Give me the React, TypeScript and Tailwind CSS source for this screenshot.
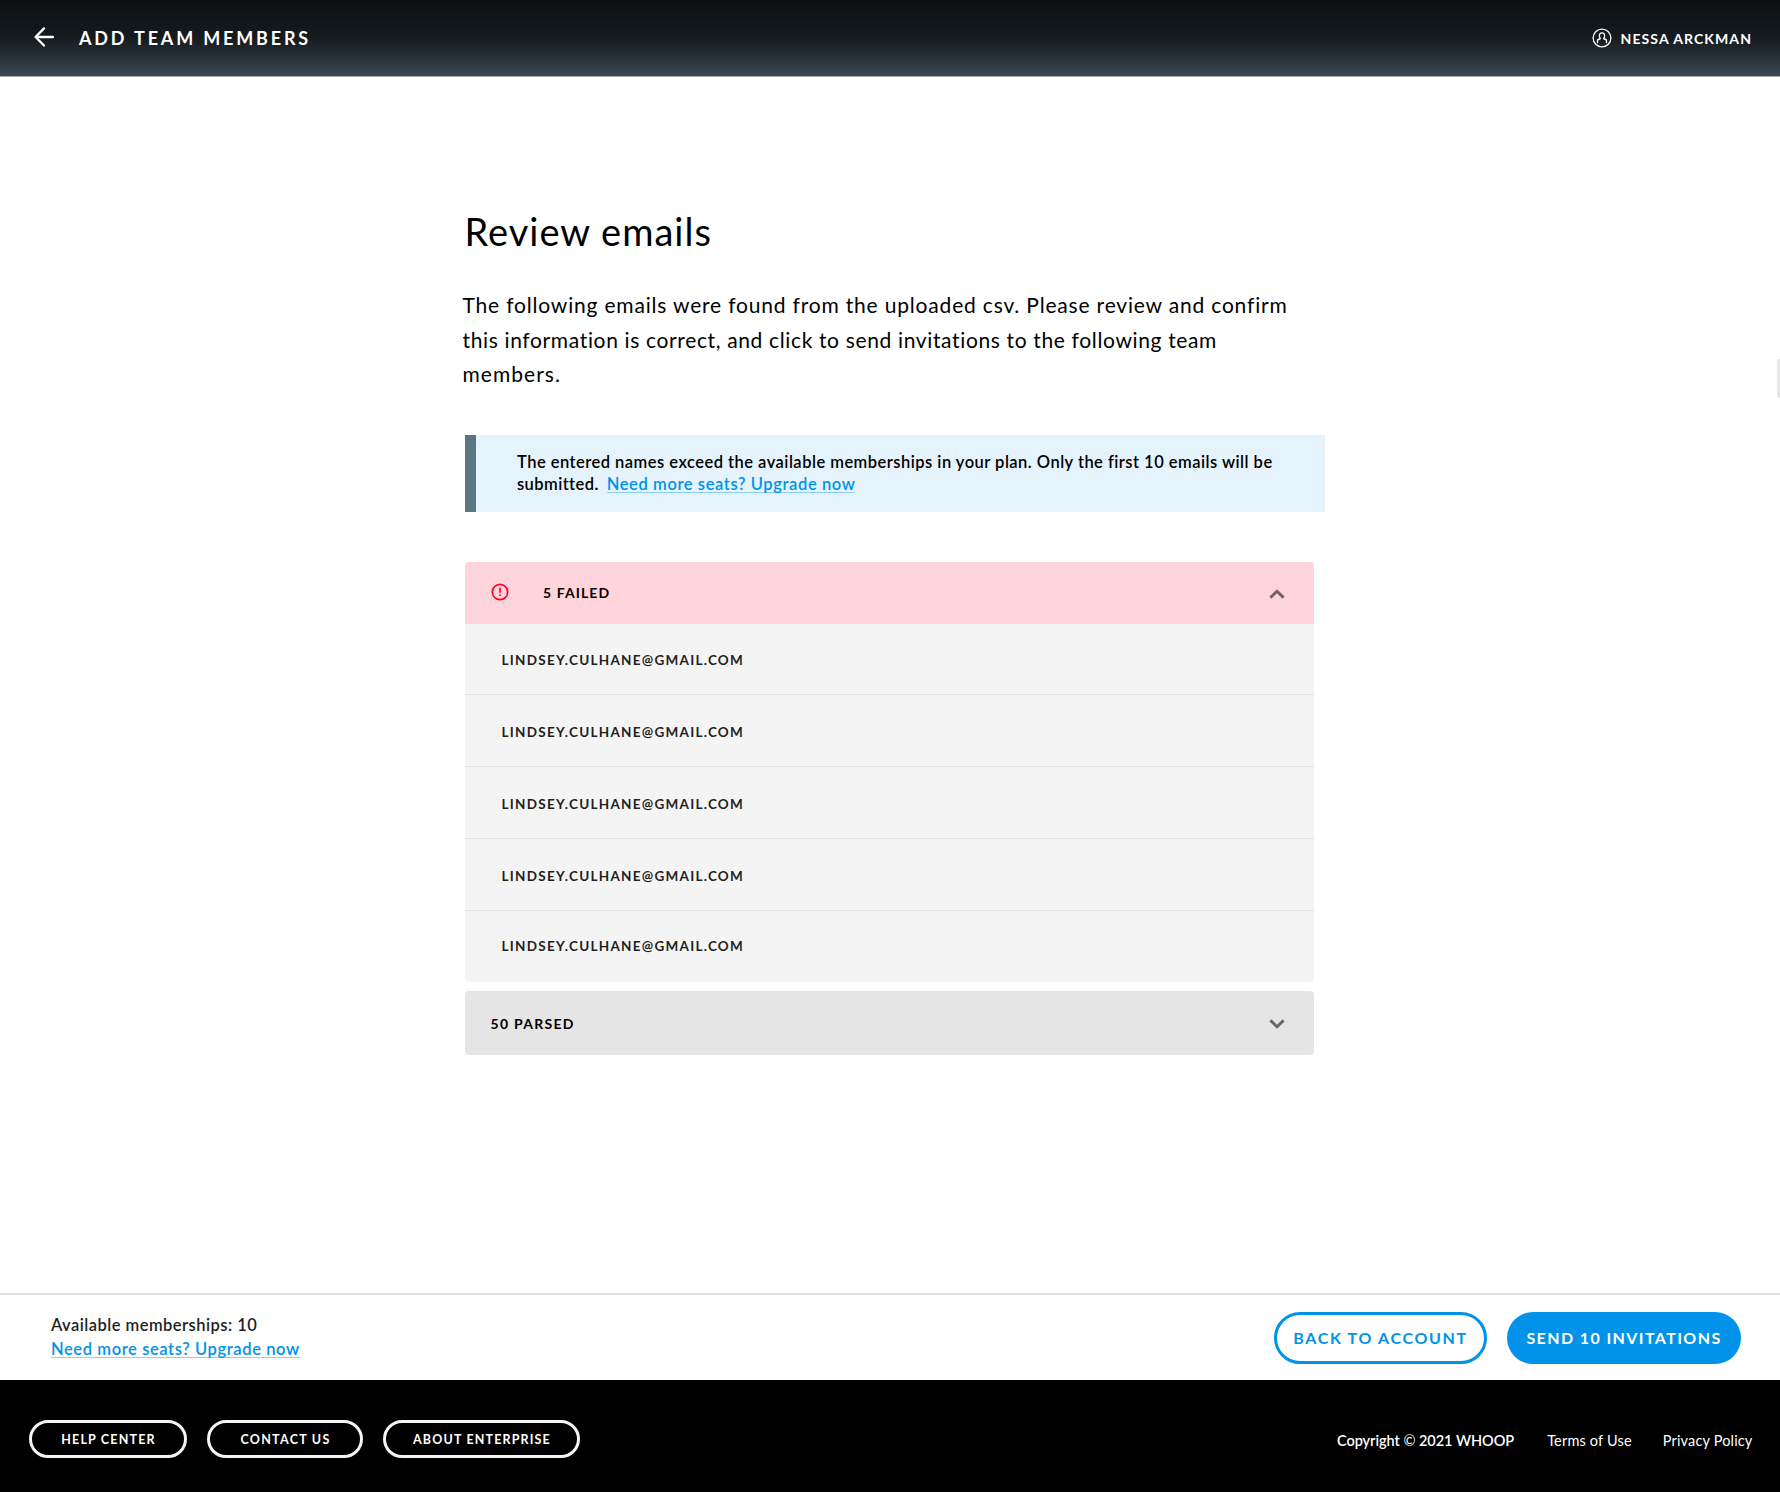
const failedRows = [
  { email: 'LINDSEY.CULHANE@GMAIL.COM', row: 'h-[71px] pt-[2px] border-b' },
  { email: 'LINDSEY.CULHANE@GMAIL.COM', row: 'h-[72px] pt-[4px] border-b' },
  { email: 'LINDSEY.CULHANE@GMAIL.COM', row: 'h-[72px] pt-[3px] border-b' },
  { email: 'LINDSEY.CULHANE@GMAIL.COM', row: 'h-[72px] pt-[4px] border-b' },
  { email: 'LINDSEY.CULHANE@GMAIL.COM', row: 'h-[71px]' },
];

function BackArrow() {
  return (
    <svg className="mb-[2px] h-5 w-5 shrink-0" viewBox="0 0 20 20" fill="none" stroke="currentColor" strokeWidth="2.3" strokeLinecap="round" strokeLinejoin="round">
      <path d="M18.9 10H1.6M10 1.4L1.6 10l8.4 8.5" />
    </svg>
  );
}

function UserIcon() {
  return (
    <svg className="mb-px h-5 w-5 shrink-0" viewBox="0 0 20 20" fill="none" stroke="currentColor" strokeWidth="1.3" strokeLinecap="round" strokeLinejoin="round">
      <circle cx="10" cy="10" r="8.9" />
      <path d="M5.500 14.700v-1.600c0-1.300.8-2 2.300-2.100l.5-.5c-.6-.7-.9-1.600-.9-2.700 0-1.800 1-3 2.600-3s2.600 1.200 2.600 3c0 1.100-.3 2-.9 2.700l.5.500c1.500.1 2.300.8 2.300 2.100v1.600" />
    </svg>
  );
}

function AlertIcon() {
  return (
    <svg className="mb-[2px] h-[18px] w-[18px] shrink-0" viewBox="0 0 18 18" fill="none" stroke="#ff0026" strokeWidth="1.7">
      <circle cx="9" cy="9" r="7.7" />
      <path d="M9 4.800v5M9 11.400v1.700" />
    </svg>
  );
}

function Chevron({ up = false }: { up?: boolean }) {
  return (
    <svg className={up ? 'h-[10px] w-4' : 'h-[10px] w-4 rotate-180'} viewBox="0 0 16 10" fill="none" stroke="#000" strokeOpacity="0.55" strokeWidth="2.900">
      <path d="M1.400 8.600L8 2.200l6.600 6.400" />
    </svg>
  );
}

function UpgradeLink({ className }: { className: string }) {
  return (
    <a href="#upgrade" className={`inline-block h-[20px] border-b border-[#8ccff7] font-semibold text-[#0093e7] ${className}`}>
      Need more seats? Upgrade now
    </a>
  );
}

export default function App() {
  return (
    <div className="relative flex h-[1492px] w-[1780px] flex-col overflow-hidden bg-white font-['Lato',sans-serif] whitespace-nowrap text-black">
      <header className="flex h-[77px] shrink-0 items-center border-b border-[#a4abb0] bg-linear-to-b from-[#0b0f12] via-[#161b1f] to-[#3c4851] pr-[28px] pl-[34px] text-white">
        <BackArrow />
        <h1 className="ml-[25px] pt-px text-[18px] font-bold tracking-[2.830px]">ADD TEAM MEMBERS</h1>
        <div className="ml-auto flex items-center">
          <UserIcon />
          <span className="ml-[9px] pt-px text-[14px] font-bold tracking-[1.080px]">NESSA ARCKMAN</span>
        </div>
      </header>

      <main className="flex h-[1216px] shrink-0 flex-col pl-[465px]">
        <h2 className="mt-[130px] -ml-[0.500px] text-[38px] leading-[48px] tracking-[1px]">Review emails</h2>
        <p className="mt-[33px] -ml-[2.500px] text-[21px] leading-[34.500px] tracking-[0.815px]">
          The following emails were found from the uploaded csv. Please review and confirm
          <br />
          <span className="tracking-[0.645px]">this information is correct, and click to send invitations to the following team</span>
          <br />
          <span className="tracking-[1.050px]">members.</span>
        </p>

        <div className="mt-[43.500px] h-[77px] w-[860px] border-l-[11px] border-[#5b7583] bg-[#e5f3fd] pt-[16px] pl-[41px] text-[16.500px] leading-[22px] font-semibold">
          <div className="tracking-[0.475px]">
            The entered names exceed the available memberships in your plan. Only the first 10 emails will be
          </div>
          <div className="flex gap-[8px]">
            <span className="tracking-[0.420px]">submitted.</span>
            <UpgradeLink className="tracking-[0.600px]" />
          </div>
        </div>

        <section className="mt-[50px] w-[849px]">
          <div className="flex h-[62px] items-center rounded-t-[4px] bg-[#ffd5db] pr-[29px] pl-[26px]">
            <AlertIcon />
            <span className="mb-px ml-[34px] text-[14px] font-bold tracking-[1.100px]">5 FAILED</span>
            <span className="mt-[2px] ml-auto">
              <Chevron up />
            </span>
          </div>
          <ul className="rounded-b-[4px] bg-[#f4f4f4]">
            {failedRows.map(({ email, row }, i) => (
              <li key={i} className={`flex items-center border-[#e3e3e3] pl-[36.500px] text-[13.500px] font-bold tracking-[1.260px] text-[#1f1f1f] ${row}`}>
                {email}
              </li>
            ))}
          </ul>
          <div className="mt-[9px] flex h-[64px] items-center rounded-[4px] bg-[#e5e5e5] pr-[29px] pl-[25.500px]">
            <span className="pt-px text-[14px] font-bold tracking-[1.280px]">50 PARSED</span>
            <span className="mt-[2px] ml-auto">
              <Chevron />
            </span>
          </div>
        </section>
      </main>

      <div className="flex h-[87px] shrink-0 items-start border-t-2 border-[#dddfe0] pr-[39px] pl-[51px]">
        <div className="mt-[19px] flex flex-col text-[16.500px] leading-[23.500px] font-semibold text-[#1f1f1f]">
          <span className="tracking-[0.460px]">Available memberships: 10</span>
          <UpgradeLink className="self-start tracking-[0.600px]" />
        </div>
        <div className="mt-[16.500px] ml-auto flex gap-[20px] text-[16px] font-bold">
          <button className="h-[52px] w-[213px] rounded-full border-[3px] border-[#0093e7] pt-px tracking-[1.650px] text-[#0093e7]">BACK TO ACCOUNT</button>
          <button className="h-[52px] w-[234px] rounded-full bg-[#0093e9] pt-px tracking-[1.400px] text-white">SEND 10 INVITATIONS</button>
        </div>
      </div>

      <footer className="flex h-[112px] shrink-0 items-center bg-black pt-[6px] pr-[27.500px] pl-[29px] text-white">
        <nav className="flex gap-5 text-[12.500px] font-bold">
          <button className="h-[38px] w-[158px] rounded-full border-[3px] border-[#f4f4f4] pt-[3px] pl-px tracking-[1.180px]">HELP CENTER</button>
          <button className="h-[38px] w-[156px] rounded-full border-[3px] border-[#f4f4f4] pt-[3px] pl-px tracking-[1.260px]">CONTACT US</button>
          <button className="h-[38px] w-[197px] rounded-full border-[3px] border-[#f4f4f4] pt-[3px] pl-px tracking-[1.150px]">ABOUT ENTERPRISE</button>
        </nav>
        <div className="ml-auto flex items-center pt-[3px] text-[14.500px]">
          <span className="font-semibold tracking-[-0.040px]">
            Copyright <span className="font-normal">©</span> 2021 WHOOP
          </span>
          <a href="#terms" className="ml-[33px] tracking-[0.180px]">Terms of Use</a>
          <a href="#privacy" className="ml-[31px] tracking-[0.160px]">Privacy Policy</a>
        </div>
      </footer>

      <div className="absolute top-[359px] right-0 h-[39px] w-[3px] rounded-l-[3px] bg-[#e6e6e6]" />
    </div>
  );
}
